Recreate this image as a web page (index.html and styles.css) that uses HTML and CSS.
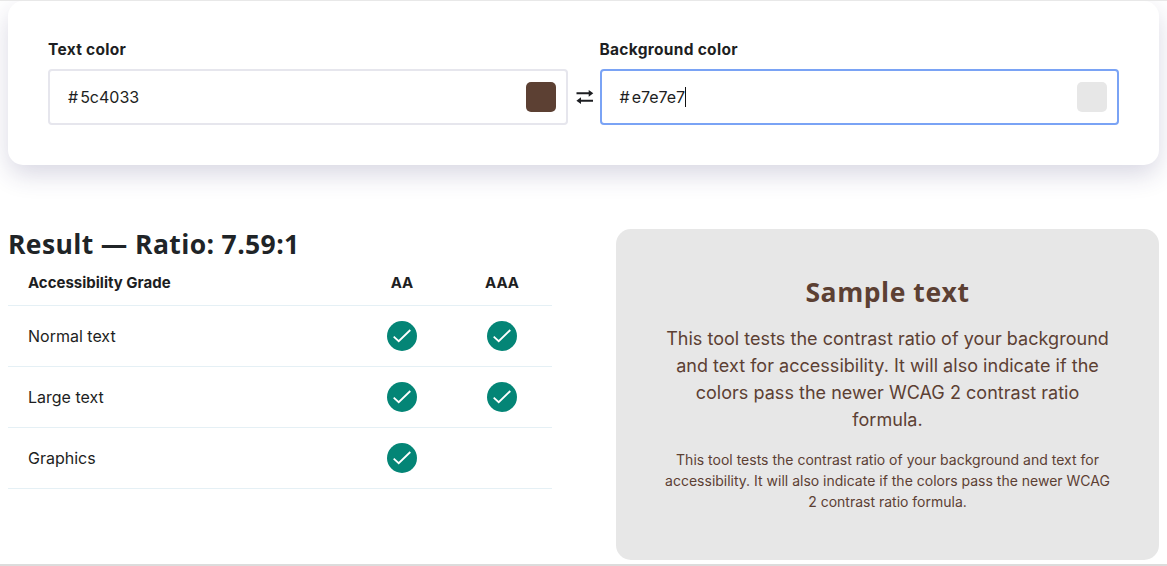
FILE: index.html
```html
<!DOCTYPE html>
<html lang="en">
<head>
<meta charset="utf-8">
<title>Color contrast checker</title>
<link rel="stylesheet" href="styles.css">
</head>
<body>
<main class="page">
  <section class="picker">
    <div class="field">
      <label class="label">Text color</label>
      <div class="input"><span class="value"><span class="hash">#</span>5c4033</span><span class="swatch brown"></span></div>
    </div>
    <svg class="swap" viewBox="0 0 18 16"><path d="M.5 4.3H14M17 11.7H4"/><path class="tip" d="M12.7 .9L17.3 4.3L12.7 7.7ZM5 8.3L.4 11.7L5 15.1Z"/></svg>
    <div class="field">
      <label class="label">Background color</label>
      <div class="input focused"><span class="value"><span class="hash">#</span>e7e7e7<span class="caret"></span></span><span class="swatch gray"></span></div>
    </div>
  </section>
  <section class="results">
    <div class="result">
      <h2 class="title">Result — Ratio: 7.59:1</h2>
      <div class="row head"><span>Accessibility Grade</span><span class="cell">AA</span><span class="cell">AAA</span></div>
      <div class="row"><span>Normal text</span><span class="cell"><svg class="check" viewBox="0 0 30 30"><circle cx="15" cy="15" r="15"/><path d="M6.7 15.7L11.7 20.2L23.3 9"/></svg></span><span class="cell"><svg class="check" viewBox="0 0 30 30"><circle cx="15" cy="15" r="15"/><path d="M6.7 15.7L11.7 20.2L23.3 9"/></svg></span></div>
      <div class="row"><span>Large text</span><span class="cell"><svg class="check" viewBox="0 0 30 30"><circle cx="15" cy="15" r="15"/><path d="M6.7 15.7L11.7 20.2L23.3 9"/></svg></span><span class="cell"><svg class="check" viewBox="0 0 30 30"><circle cx="15" cy="15" r="15"/><path d="M6.7 15.7L11.7 20.2L23.3 9"/></svg></span></div>
      <div class="row"><span>Graphics</span><span class="cell"><svg class="check" viewBox="0 0 30 30"><circle cx="15" cy="15" r="15"/><path d="M6.7 15.7L11.7 20.2L23.3 9"/></svg></span><span class="cell"></span></div>
    </div>
    <div class="sample">
      <h3 class="sample-title">Sample text</h3>
      <p class="large">This tool tests the contrast ratio of your background<br>and text for accessibility. It will also indicate if the<br>colors pass the newer WCAG 2 contrast ratio<br>formula.</p>
      <p class="small">This tool tests the contrast ratio of your background and text for<br>accessibility. It will also indicate if the colors pass the newer WCAG<br>2 contrast ratio formula.</p>
    </div>
  </section>
</main>
</body>
</html>
```
FILE: styles.css
```css
* { box-sizing: border-box; }
body { margin: 0; background: #fff; color: #1d1e22; font-family: Inter, sans-serif; font-size: 16px; }
.page { height: 566px; padding: 0 8px; overflow: hidden; border-top: 1px solid #e8e8e8; border-bottom: 2px solid #dcdcdc; }
.picker { height: 164px; padding: 38px 40px 0; display: flex; border-radius: 15px; box-shadow: 0 10px 26px -1px rgba(40, 35, 100, .19); }
.field { flex: 1; }
.label { display: block; height: 30px; line-height: 21px; font-size: 15.5px; font-weight: 650; letter-spacing: .29px; }
.input { height: 56px; padding: 0 10px 0 18px; display: flex; align-items: center; justify-content: space-between; border: 2px solid #e6e6ed; border-radius: 4px; }
.focused { border-color: #7aa3f5; }
.value { display: flex; align-items: center; }
.hash { margin-right: 2px; }
.caret { width: 1px; height: 20px; background: #111; }
.swatch { width: 30px; height: 30px; border-radius: 5px; }
.brown { background: #5c4033; }
.gray { background: #e7e7e7; }
.swap { width: 18px; height: 16px; margin: 50px 6px 0 8px; fill: none; stroke: #1d1e22; stroke-width: 1.9; }
.swap .tip { fill: #1d1e22; stroke: none; }
.results { display: flex; justify-content: space-between; padding-top: 64px; }
.result { width: 544px; }
.title { margin: 0; height: 32px; line-height: 30px; font-family: "Open Sans", sans-serif; font-size: 26.5px; font-weight: 740; letter-spacing: .38px; color: #202427; white-space: nowrap; }
.row { display: grid; grid-template-columns: 1fr 100px 100px; align-items: center; height: 61px; padding-left: 20px; border-bottom: 1px solid #e5f0f5; }
.head { height: 45px; padding-bottom: 2px; font-weight: 650; font-size: 15px; }
.cell { display: flex; justify-content: center; }
.check { width: 30px; height: 30px; fill: #048576; }
.check path { fill: none; stroke: #fff; stroke-width: 1.8; }
.sample { width: 543px; height: 331px; padding: 46px 40px 0; background: #e7e7e7; border-radius: 15px; color: #5c4033; text-align: center; }
.sample-title { margin: 0; height: 50px; line-height: 34px; font-family: "Open Sans", sans-serif; font-weight: 740; font-size: 26.5px; letter-spacing: .55px; }
.large { margin: 0; font-size: 18px; line-height: 27px; letter-spacing: .03px; white-space: nowrap; }
.small { margin: 16px 0 0; font-size: 14px; line-height: 21px; white-space: nowrap; }
```
